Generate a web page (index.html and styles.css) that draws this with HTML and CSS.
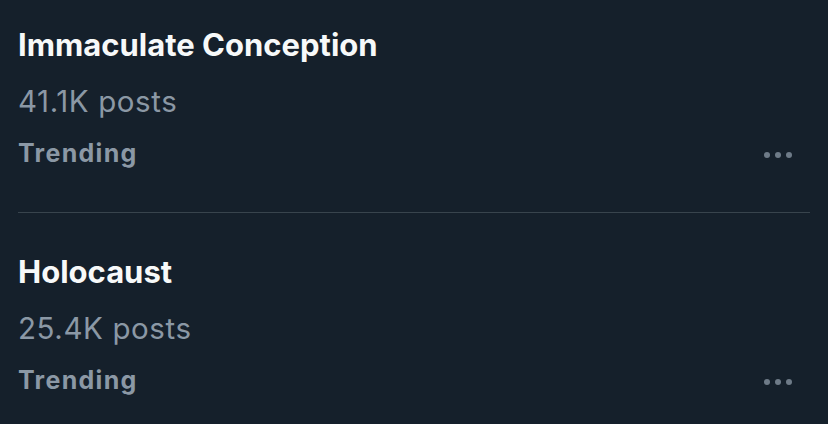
FILE: index.html
```html
<!DOCTYPE html>
<html>
<head>
<meta charset="utf-8">
<link rel="stylesheet" href="styles.css">
</head>
<body>
<div class="list">
  <div class="trend">
    <div class="title">Immaculate Conception</div>
    <div class="count">41.1K posts</div>
    <div class="meta">
      <span class="label">Trending</span>
      <span class="more"><i></i><i></i><i></i></span>
    </div>
  </div>
  <div class="trend last">
    <div class="title">Holocaust</div>
    <div class="count">25.4K posts</div>
    <div class="meta">
      <span class="label">Trending</span>
      <span class="more"><i></i><i></i><i></i></span>
    </div>
  </div>
</div>
</body>
</html>
```
FILE: styles.css
```css
html, body {
  margin: 0;
  padding: 0;
  background: #15202b;
}
body {
  font-family: Inter, "Liberation Sans", sans-serif;
  width: 828px;
  height: 424px;
  overflow: hidden;
}
.list {
  padding: 0 18px;
}
.trend {
  padding-top: 25px;
  padding-bottom: 43px;
  border-bottom: 1px solid #38444d;
  display: flex;
  flex-direction: column;
}
.trend.last {
  border-bottom: none;
  padding-top: 39px;
}
.title {
  color: #f7f9f9;
  font-weight: 700;
  font-size: 31px;
  line-height: 40px;
}
.count {
  color: #8b98a5;
  font-size: 29.5px;
  line-height: 40px;
  letter-spacing: 0.6px;
  margin-top: 16px;
}
.meta {
  display: flex;
  justify-content: space-between;
  align-items: center;
  margin-top: 16px;
}
.label {
  color: #8b98a5;
  font-weight: 700;
  font-size: 25px;
  line-height: 32px;
  letter-spacing: 1.3px;
}
.more {
  display: flex;
  gap: 5px;
  margin-right: 18px;
  margin-top: 4px;
}
.more i {
  display: block;
  width: 6px;
  height: 6px;
  border-radius: 50%;
  background: #6e7b88;
}
```
